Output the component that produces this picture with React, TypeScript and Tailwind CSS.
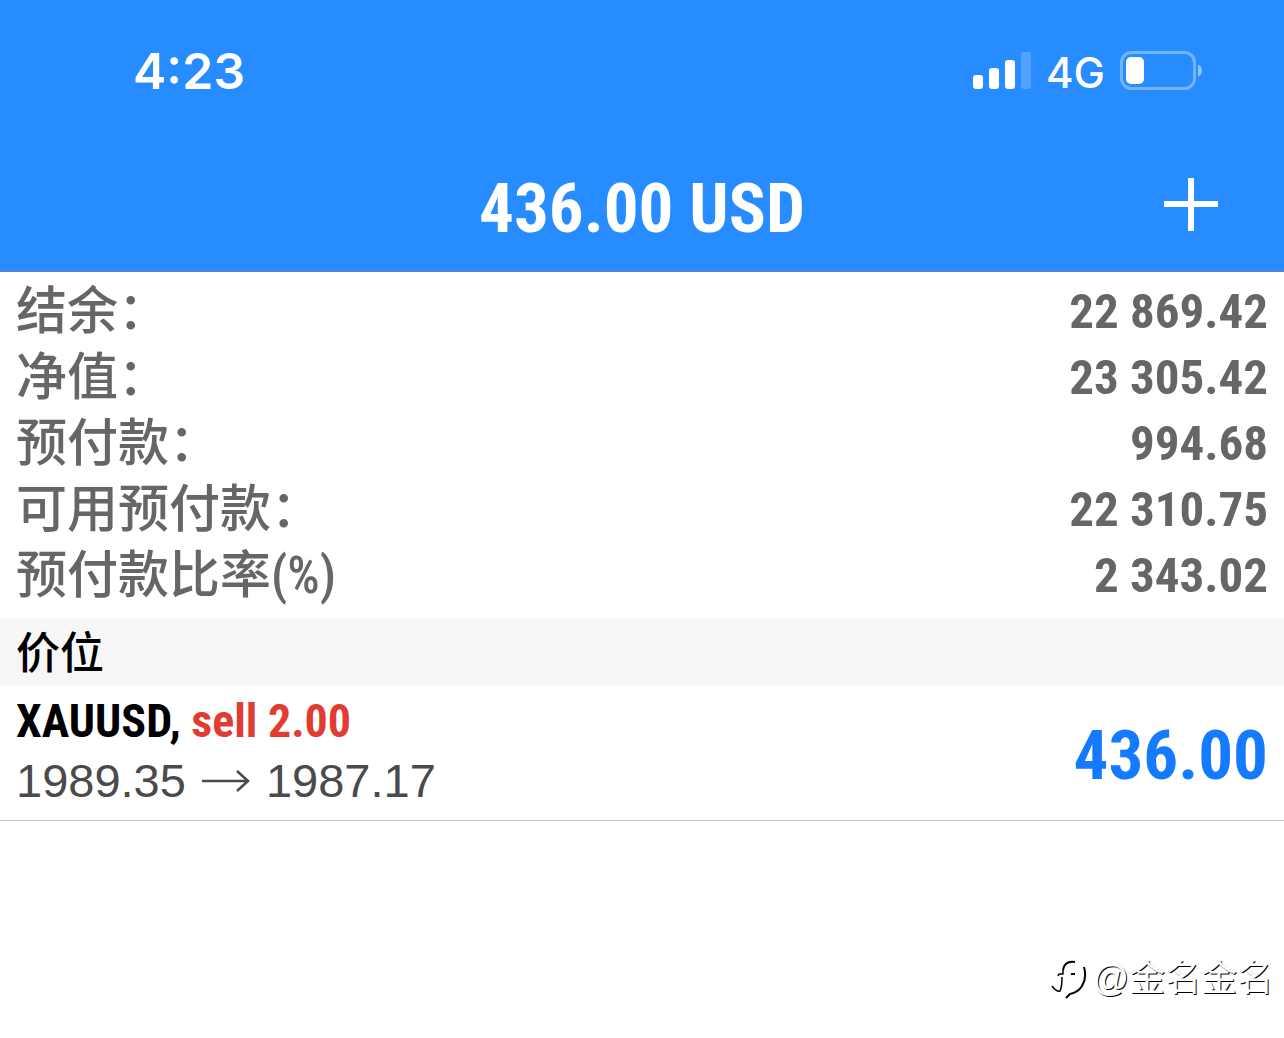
const balances = [
  { id: "balance", label: "结余：", value: "22 869.42" },
  { id: "equity", label: "净值：", value: "23 305.42" },
  { id: "margin", label: "预付款：", value: "994.68" },
  { id: "free", label: "可用预付款：", value: "22 310.75" },
  { id: "level", label: "预付款比率(%)", value: "2 343.02" },
];

function SignalIcon() {
  return (
    <svg width="58" height="38" viewBox="0 0 58 38" fill="white" aria-hidden="true">
      <rect x="0" y="23" width="10" height="14" rx="3" />
      <rect x="16" y="16" width="10" height="21" rx="3" />
      <rect x="32" y="8" width="10" height="29" rx="3" />
      <rect x="48" y="0" width="10" height="37" rx="3" opacity="0.2" />
    </svg>
  );
}

function BatteryIcon() {
  return (
    <svg width="82" height="40" viewBox="0 0 82 40" fill="none" aria-hidden="true">
      <rect x="1.5" y="1.5" width="73" height="36" rx="10" stroke="white" strokeWidth="3" opacity="0.35" />
      <rect x="6" y="6" width="18" height="27" rx="5" fill="white" />
      <path d="M78 13.500c2.500 1 4 3 4 6s-1.500 5-4 6z" fill="white" opacity="0.5" />
    </svg>
  );
}

function StatusBar() {
  return (
    <div className="flex h-[142px] items-center justify-between pr-[82px] pl-[133px]">
      <span className='font-["Inter",sans-serif] text-[50px] font-semibold leading-none'>4:23</span>
      <div className="flex items-center gap-[15px]">
        <SignalIcon />
        <span className='pt-1 font-["Inter",sans-serif] text-[42px] font-medium leading-none'>4G</span>
        <BatteryIcon />
      </div>
    </div>
  );
}

function Watermark() {
  return (
    <div className="flex items-center justify-end gap-1 pt-[136px] pr-[11px] text-white">
      <svg width="38" height="44" viewBox="0 0 38 44" fill="none" stroke="black" strokeLinejoin="round" aria-hidden="true">
        <path d="M13 13c1-6 5-9 12-8" strokeWidth="2" />
        <path d="M34 10c2 7 1 14-2 19-3 5-7 7-12 8l-4 4" strokeWidth="2" />
        <path d="M8 19l1-2h4v-4" strokeWidth="1.500" />
        <path d="M21 17h4" strokeWidth="2" />
        <path d="M12 20c0 6 0 10-2 14-3 1-5-1-8-5" strokeWidth="1.500" />
      </svg>
      <span className='font-["Liberation_Sans","Noto_Sans_CJK_SC",sans-serif] text-[36px] leading-none [text-shadow:1px_1px_0_#000]'>@金名金名</span>
    </div>
  );
}

export default function App() {
  return (
    <div className="min-h-screen bg-white">
      <header className="border-b-2 border-[#4f87d2] bg-[#268cff] text-white">
        <StatusBar />
        <div className="grid h-32 grid-cols-[1fr_auto_1fr] items-center pr-16">
          <h1 className='col-start-2 ml-16 pt-1 font-["Roboto_Condensed","Roboto",sans-serif] text-[69px] font-bold leading-none'>436.00 USD</h1>
          <button type="button" aria-label="新订单" className="justify-self-end">
            <svg width="56" height="56" viewBox="0 0 56 56" stroke="white" strokeWidth="6" aria-hidden="true">
              <path d="M0 26h54M27 -1v54" />
            </svg>
          </button>
        </div>
      </header>
      <main>
        <dl className='px-4 pt-[6px] pb-[10px] font-["Roboto_Condensed","Noto_Sans_CJK_SC",sans-serif] text-[#666]'>
          {balances.map((b) => (
            <div key={b.id} className="flex h-[66px] items-center justify-between leading-none">
              <dt className="text-[51px] font-medium">{b.label}</dt>
              <dd className="text-[49px] font-bold">{b.value}</dd>
            </div>
          ))}
        </dl>
        <h2 className='flex h-[67px] items-center bg-[#f7f7f7] px-4 pb-1 font-["Noto_Sans_CJK_SC",sans-serif] text-[44px] font-medium leading-none text-black'>价位</h2>
        <section className="flex items-center justify-between border-b border-[#c4c4c4] px-4 pt-2 pb-[7px]">
          <div>
            <p className='font-["Roboto_Condensed","Roboto",sans-serif] text-[46px] font-bold leading-[56px] text-black'>
              XAUUSD, <span className="text-[#e03c31]">sell 2.00</span>
            </p>
            <p className='flex items-center gap-4 font-["Liberation_Sans",sans-serif] text-[47px] leading-[64px] text-[#4a4a4d]'>
              1989.35
              <svg width="48" height="24" viewBox="0 0 48 24" fill="none" stroke="currentColor" strokeWidth="2.500" role="img" aria-label="至">
                <path d="M0 12h46M35 2l11 10-11 10" />
              </svg>
              1987.17
            </p>
          </div>
          <p className='pt-1 font-["Roboto_Condensed","Roboto",sans-serif] text-[69px] font-bold leading-none text-[#147aff]'>436.00</p>
        </section>
        <Watermark />
      </main>
    </div>
  );
}
